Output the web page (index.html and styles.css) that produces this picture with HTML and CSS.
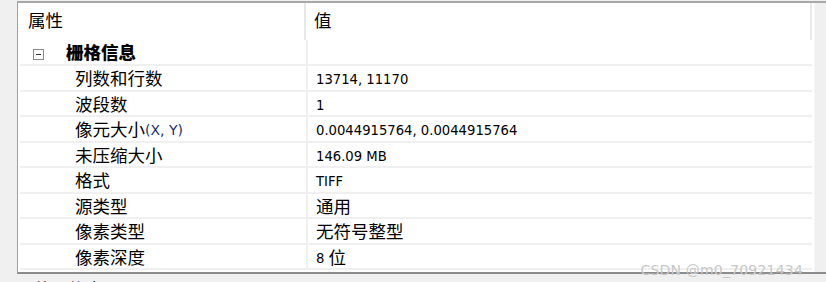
FILE: index.html
```html
<!DOCTYPE html>
<html lang="zh-CN">
<head>
    <meta charset="UTF-8">
    <title>图层属性</title>
    <link rel="stylesheet" href="styles.css">
</head>
<body>
    <div class="panel">
        <div class="grid">
            <!-- 表头 -->
            <div class="head">
                <div class="cell key">属性</div>
                <div class="cell val">值</div>
            </div>

            <!-- 分组：栅格信息 -->
            <div class="group">
                <div class="cell key"><span class="toggle"></span><b>栅格信息</b></div>
                <div class="cell val"></div>
            </div>

            <div class="row">
                <div class="cell key sub">列数和行数</div>
                <div class="cell val"><span class="lat">13714, 11170</span></div>
            </div>
            <div class="row">
                <div class="cell key sub">波段数</div>
                <div class="cell val"><span class="lat">1</span></div>
            </div>
            <div class="row">
                <div class="cell key sub">像元大小<span class="lat">(X, Y)</span></div>
                <div class="cell val"><span class="lat">0.0044915764, 0.0044915764</span></div>
            </div>
            <div class="row">
                <div class="cell key sub">未压缩大小</div>
                <div class="cell val"><span class="lat">146.09 MB</span></div>
            </div>
            <div class="row">
                <div class="cell key sub">格式</div>
                <div class="cell val"><span class="lat">TIFF</span></div>
            </div>
            <div class="row">
                <div class="cell key sub">源类型</div>
                <div class="cell val">通用</div>
            </div>
            <div class="row">
                <div class="cell key sub">像素类型</div>
                <div class="cell val">无符号整型</div>
            </div>
            <div class="row">
                <div class="cell key sub">像素深度</div>
                <div class="cell val"><span class="lat">8 </span>位</div>
            </div>
        </div>
        <div class="scroll"></div>
        <span class="mark">CSDN @m0_70921434</span>
    </div>
    <div class="below">范围信息</div>
</body>
</html>
```

FILE: styles.css
```css
body {
    margin: 0;
    background: #f0f0f0;
    font-family: "Noto Sans CJK SC", "Microsoft YaHei", sans-serif;
    font-size: 17.5px;
    color: #000;
    overflow: hidden;
    height: 282px;
}
.panel {
    position: relative;
    margin: 1px 0 0 17px;
    height: 269px;
    border-top: 2px solid #a8a8a8;
    border-left: 1px solid #a0a0a0;
    border-bottom: 2px solid #8c8c8c;
    background: #fff;
    display: flex;
}
.grid {
    flex: 1;
    display: flex;
    flex-direction: column;
}
.head, .group, .row {
    display: grid;
    grid-template-columns: 288px 1fr;
    margin-right: 2px;
}
.head { height: 37px; }
.head .cell { line-height: 34px; }
.head .key { border-right: 2px solid #e8e8e8; padding-left: 10px; }
.head .val { border-right: 2px solid #e8e8e8; }
.group {
    height: 24px;
    border-bottom: 2px solid #f0f0f0;
    margin-left: 2px;
}
.row {
    height: 23.5px;
    border-bottom: 2px solid #f0f0f0;
    margin-left: 2px;
}
.cell {
    line-height: 23px;
    white-space: nowrap;
    overflow: hidden;
}
.group .key, .row .key { border-right: 2px solid #f0f0f0; }
.val { padding-left: 8px; }
.sub { padding-left: 55px; }
.group b { font-weight: 900; margin-left: 22px; }
.toggle {
    display: inline-block;
    position: relative;
    width: 9px;
    height: 9px;
    margin-left: 13px;
    border: 1px solid #8a8a8a;
    vertical-align: -1px;
}
.toggle::after {
    content: "";
    position: absolute;
    left: 2px; top: 4px;
    width: 5px; height: 1px;
    background: #333;
}
.lat {
    font-family: "DejaVu Sans", Verdana, sans-serif;
    font-size: 13.2px;
    vertical-align: 1px;
}
.sub .lat { font-size: 14px; color: #1c2f6a; }
.scroll {
    width: 11px;
    background: #f0f0f0;
    border-left: 1px solid #f6f6f6;
}
.mark {
    position: absolute;
    right: 23px;
    bottom: -6px;
    font-family: "DejaVu Sans", sans-serif;
    font-size: 14px;
    color: #c8c8c8;
    letter-spacing: 0.2px;
}
.below {
    margin: 5px 0 0 33px;
    line-height: 20px;
}
```
